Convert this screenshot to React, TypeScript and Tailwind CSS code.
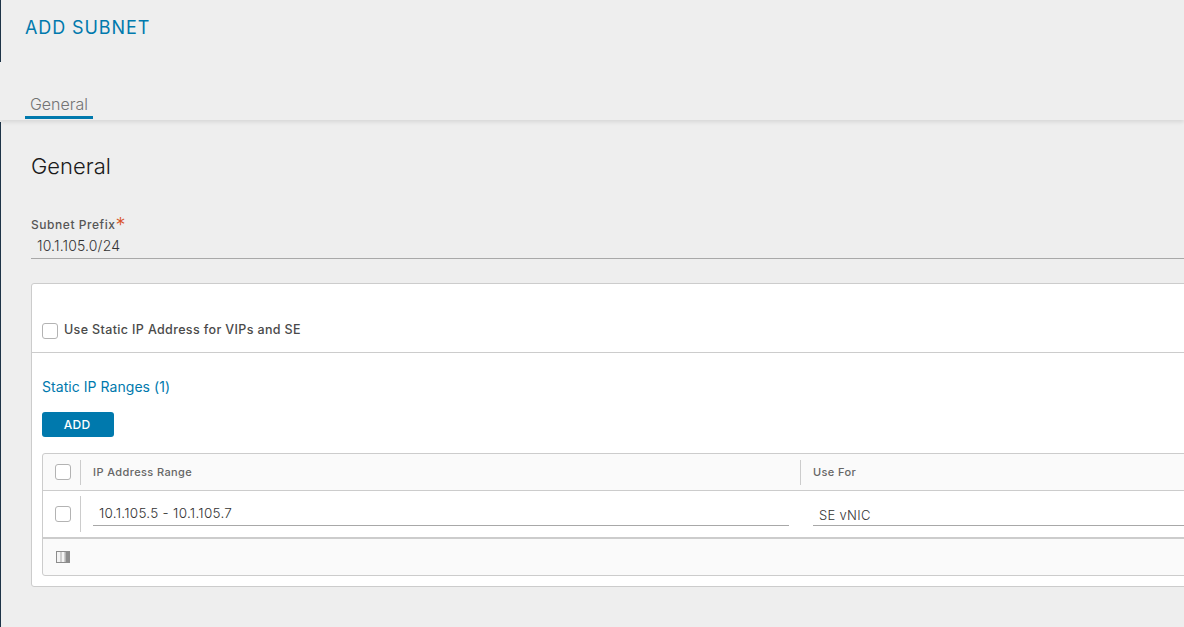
const font = "font-['Inter','Liberation_Sans',sans-serif]";

function Box() {
  return <div className="h-4 w-4 shrink-0 rounded-[3px] border border-[#b3b3b3] bg-white" />;
}

function Stripe({ className }: { className: string }) {
  return <div className={`w-px shrink-0 bg-[#1d3347] ${className}`} />;
}

export default function App() {
  return (
    <div className={`flex h-[627px] w-[1184px] flex-col overflow-hidden bg-[#eeeeee] ${font}`}>
      <header className="relative z-10 flex h-[120px] shrink-0 shadow-[0_2px_4px_rgba(0,0,0,0.1)]">
        <Stripe className="h-[62px]" />
        <div className="flex flex-1 flex-col pl-6">
          <h1 className="mt-[17px] h-[22px] text-[18px] leading-[22px] font-normal tracking-[0.9px] text-[#0079ad]">ADD SUBNET</h1>
          <div className="mt-[56px] flex h-[24px] w-[68px] items-start justify-center border-b-[3px] border-[#0079ad]">
            <span className="-mt-px text-[16px] leading-[20px] font-light text-[#737373]">General</span>
          </div>
        </div>
      </header>

      <div className="flex flex-1">
        <Stripe className="mt-[2px]" />
        <main className="flex-1 pl-[30px]">
          <h2 className="mt-[33px] h-[26px] text-[22px] leading-[26px] font-light text-[#1a1a1a]">General</h2>

          <div className="mt-[36px] flex h-[20px] items-start text-[12px] leading-[20px] font-medium tracking-[0.55px] text-[#565656]">
            Subnet Prefix
            <span className="text-[20px] leading-[20px] font-light text-[#d9542b]">*</span>
          </div>
          <div className="h-[24px] border-b border-[#a8a8a8] pt-[2px] pl-[6px] text-[14px] leading-[17px] font-light tracking-[0.15px] text-[#333333]">
            10.1.105.0/24
          </div>

          <section className="mt-6 h-[304px] w-[1200px] rounded-[3px] border border-[#cccccc] bg-white">
            <div className="flex h-[69px] items-center gap-[6px] border-b border-[#cccccc] pt-[25px] pl-[10px]">
              <Box />
              <span className="text-[12.5px] font-medium tracking-[0.36px] text-[#4a4a4a]">Use Static IP Address for VIPs and SE</span>
            </div>

            <div className="pt-[24px] pl-[10px]">
              <h3 className="h-[20px] text-[14px] leading-[20px] font-normal tracking-[0.05px] text-[#0079ad]">Static IP Ranges (1)</h3>
              <button className="mt-[15px] block h-[25px] w-[72px] rounded-[3px] bg-[#0079ad] pr-[2px] text-[12px] font-medium tracking-[0.3px] text-white">
                ADD
              </button>

              <div className="mt-4 h-[123px] rounded-[3px] border border-[#cccccc] bg-[#fafafa]">
                <div className="flex h-[37px] items-center border-b border-[#cccccc] text-[11px] font-medium tracking-[0.4px] text-[#666666]">
                  <div className="flex w-[37px] shrink-0 justify-center pl-[3px]"><Box /></div>
                  <div className="h-[25px] w-px shrink-0 bg-[#cccccc]" />
                  <div className="w-[719px] shrink-0 pl-3">IP Address Range</div>
                  <div className="h-[25px] w-px shrink-0 bg-[#cccccc]" />
                  <div className="pl-3">Use For</div>
                </div>

                <div className="flex h-[48px] items-center border-b-2 border-[#cccccc] bg-white text-[13.5px] font-light text-[#333333]">
                  <div className="flex w-[37px] shrink-0 justify-center pl-[3px]"><Box /></div>
                  <div className="h-[36px] w-px shrink-0 bg-[#cccccc]" />
                  <div className="mt-[7px] ml-3 h-[28px] w-[696px] shrink-0 self-start border-b border-[#a8a8a8] pt-[3px] pl-[6px] leading-[24px] tracking-[0.27px]">
                    10.1.105.5 - 10.1.105.7
                  </div>
                  <div className="mt-[7px] ml-6 h-[28px] flex-1 self-start border-b border-[#a8a8a8] pt-[5px] pl-[6px] text-[13px] leading-[24px] tracking-[0.3px]">
                    SE vNIC
                  </div>
                </div>

                <div className="flex h-[36px] items-center pl-[13px]">
                  <svg width="14" height="12" viewBox="0 0 14 12">
                    <rect x="0.5" y="0.5" width="13" height="11" fill="#f4f4f4" stroke="#8c8c8c" />
                    <rect x="9.5" y="1" width="4" height="10" fill="#8c8c8c" />
                    <path d="M5 1v10M9 1v10" stroke="#a8a8a8" />
                  </svg>
                </div>
              </div>
            </div>
          </section>
        </main>
      </div>
    </div>
  );
}
